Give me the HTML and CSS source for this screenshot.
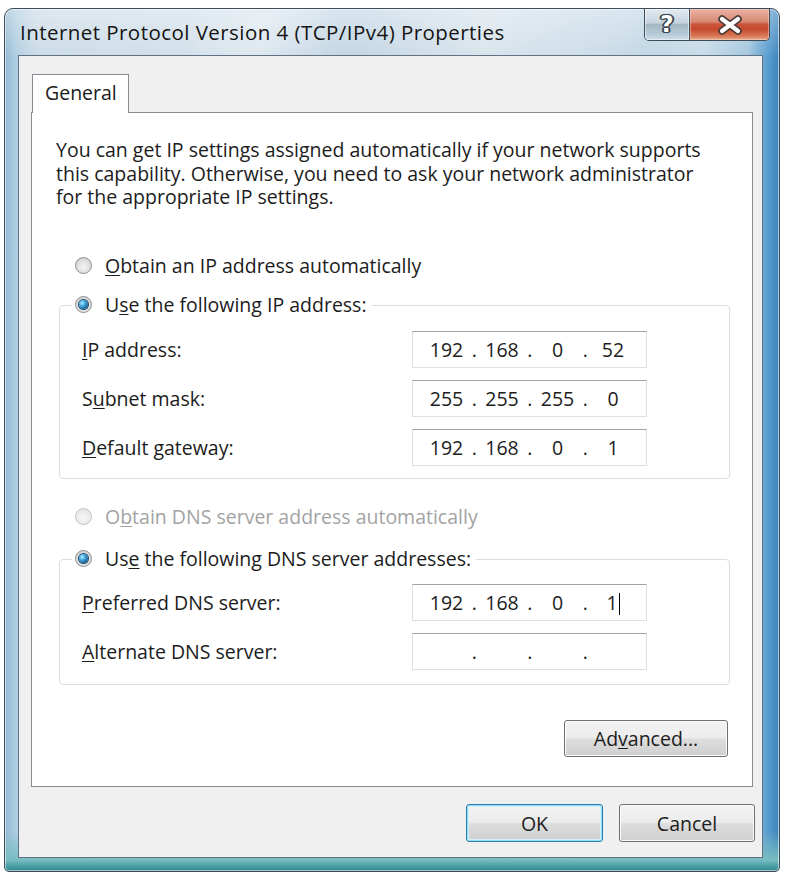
FILE: index.html
```html
<!DOCTYPE html>
<html lang="en">
<head>
<meta charset="utf-8">
<title>Internet Protocol Version 4 (TCP/IPv4) Properties</title>
<link rel="stylesheet" href="styles.css">
</head>
<body>
<div class="window">
  <div class="titlebar">
    <div class="title">Internet Protocol Version 4 (TCP/IPv4) Properties</div>
    <div class="caption-btns">
      <div class="cbtn help"><span class="qmark">?</span></div>
      <div class="cbtn close">
        <svg width="26" height="20" viewBox="0 0 26 20" aria-hidden="true">
          <path d="M5 4 L21 16 M21 4 L5 16" stroke="#4a3a36" stroke-width="7.5" stroke-linecap="round" fill="none"/>
          <path d="M5 4 L21 16 M21 4 L5 16" stroke="#ffffff" stroke-width="4.2" stroke-linecap="round" fill="none"/>
        </svg>
      </div>
    </div>
  </div>
  <div class="client">
    <div class="tabs"><div class="tab">General</div></div>
    <div class="panel">
      <p class="desc">You can get IP settings assigned automatically if your network supports<br>this capability. Otherwise, you need to ask your network administrator<br>for the appropriate IP settings.</p>

      <div class="opt opt-ip"><span class="radio"></span><span><u>O</u>btain an IP address automatically</span></div>

      <div class="group group-ip">
        <div class="legend"><span class="radio on"></span><span>U<u>s</u>e the following IP address:</span></div>
        <div class="rows">
          <div class="row">
            <span class="lbl"><u>I</u>P address:</span>
            <div class="ip"><span class="oct">192</span><span class="dot">.</span><span class="oct">168</span><span class="dot">.</span><span class="oct">0</span><span class="dot">.</span><span class="oct">52</span></div>
          </div>
          <div class="row">
            <span class="lbl">S<u>u</u>bnet mask:</span>
            <div class="ip"><span class="oct">255</span><span class="dot">.</span><span class="oct">255</span><span class="dot">.</span><span class="oct">255</span><span class="dot">.</span><span class="oct">0</span></div>
          </div>
          <div class="row">
            <span class="lbl"><u>D</u>efault gateway:</span>
            <div class="ip"><span class="oct">192</span><span class="dot">.</span><span class="oct">168</span><span class="dot">.</span><span class="oct">0</span><span class="dot">.</span><span class="oct">1</span></div>
          </div>
        </div>
      </div>

      <div class="opt opt-dns disabled"><span class="radio"></span><span>O<u>b</u>tain DNS server address automatically</span></div>

      <div class="group group-dns">
        <div class="legend"><span class="radio on"></span><span>Us<u>e</u> the following DNS server addresses:</span></div>
        <div class="rows">
          <div class="row">
            <span class="lbl"><u>P</u>referred DNS server:</span>
            <div class="ip"><span class="oct">192</span><span class="dot">.</span><span class="oct">168</span><span class="dot">.</span><span class="oct">0</span><span class="dot">.</span><span class="oct">1<span class="caret"></span></span></div>
          </div>
          <div class="row">
            <span class="lbl"><u>A</u>lternate DNS server:</span>
            <div class="ip"><span class="oct"></span><span class="dot">.</span><span class="oct"></span><span class="dot">.</span><span class="oct"></span><span class="dot">.</span><span class="oct"></span></div>
          </div>
        </div>
      </div>

      <div class="adv-wrap"><button class="btn adv" type="button">Ad<u>v</u>anced...</button></div>
    </div>
    <div class="footer">
      <button class="btn ok" type="button">OK</button>
      <button class="btn cancel" type="button">Cancel</button>
    </div>
  </div>
</div>
</body>
</html>
```

FILE: styles.css
```css
* { box-sizing: border-box; }

html, body {
  margin: 0;
  padding: 0;
  background: #ffffff;
}

body {
  font-family: "Open Sans", "Noto Sans", "DejaVu Sans", sans-serif;
  font-size: 19.5px;
  color: #1c1c1c;
}

u { text-decoration: underline; text-underline-offset: 2px; text-decoration-thickness: 1px; }

/* ---------- window frame ---------- */
.window {
  margin: 8px 0 0 4px;
  width: 776px;
  height: 864px;
  border: 1px solid #3b4d5c;
  border-radius: 9px 9px 5px 5px;
  display: flex;
  flex-direction: column;
  overflow: hidden;
  background:
    linear-gradient(to top, #2c858c 0, #4a9fa6 5px, #78bcc0 11px, rgba(120,188,192,0) 40px),
    linear-gradient(to bottom, rgba(255,255,255,0.35) 0, rgba(255,255,255,0) 50px),
    linear-gradient(100deg, rgba(255,255,255,0) 20%, rgba(255,255,255,0.35) 28%, rgba(255,255,255,0) 36%, rgba(255,255,255,0) 70%, rgba(255,255,255,0.3) 76%, rgba(255,255,255,0) 82%),
    linear-gradient(to right, #94b9d3 0, #b2cfe2 12px, #cbdbe7 30px, #d3e0ea 25%, #c3d6e4 45%, #d9e4ec 62%, #c8dae7 80%, #9fc3dc 96%, #5b9dcf 98.5%, #3a83bb 100%);
  box-shadow: inset 0 0 0 1px rgba(255,255,255,0.55);
}

.titlebar {
  height: 46px;
  display: flex;
  justify-content: space-between;
  align-items: flex-start;
  padding: 0 9px 0 15px;
  flex: none;
}

.title {
  padding-top: 11px;
  line-height: 24px;
  font-size: 20.5px;
  letter-spacing: 0.45px;
  color: #141414;
  white-space: nowrap;
}

.caption-btns {
  display: flex;
  height: 32px;
  border: 1px solid #3e4a56;
  border-top: none;
  border-radius: 0 0 5px 5px;
  overflow: hidden;
}

.cbtn {
  height: 100%;
  display: flex;
  align-items: center;
  justify-content: center;
}

.help {
  width: 45px;
  border-right: 1px solid #3e4a56;
  background: linear-gradient(to bottom, #e4ebf0 0%, #c6d3dd 45%, #a4b6c4 50%, #b6c9d6 80%, #cfdfe8 100%);
  box-shadow: inset 0 0 0 1px rgba(255,255,255,0.5);
}

.qmark {
  font-family: "DejaVu Sans", sans-serif;
  font-weight: 700;
  font-size: 23px;
  line-height: 1;
  color: #ffffff;
  text-shadow: 1px 0 #3c4650, -1px 0 #3c4650, 0 1px #3c4650, 0 -1px #3c4650,
               1px 1px #3c4650, -1px -1px #3c4650, 1px -1px #3c4650, -1px 1px #3c4650,
               2px 0 #3c4650, -2px 0 #3c4650;
}

.close {
  width: 79px;
  background: linear-gradient(to bottom, #eab2a5 0%, #d98a76 40%, #c9543a 50%, #c7492e 65%, #d97a5a 88%, #eab08e 100%);
  box-shadow: inset 0 0 0 1px rgba(255,220,210,0.45);
}

/* ---------- client area ---------- */
.client {
  flex: 1;
  margin: 0 16px 13px 13px;
  border: 1px solid #5e7282;
  background: #f0f0f0;
  padding: 18px 7px 0 12px;
  display: flex;
  flex-direction: column;
}

.tabs {
  display: flex;
  height: 38px;
  flex: none;
}

.tab {
  position: relative;
  z-index: 1;
  margin-left: 1px;
  width: 97px;
  height: 39px;
  border: 1px solid #898c95;
  border-bottom: none;
  background: #ffffff;
  padding-left: 12px;
  line-height: 36px;
}

.panel {
  width: 722px;
  height: 675px;
  flex: none;
  border: 1px solid #898c95;
  background: #ffffff;
  display: flex;
  flex-direction: column;
}

.desc {
  margin: 25px 0 0 24px;
  line-height: 23.5px;
  white-space: nowrap;
}

/* radio options */
.opt, .legend {
  display: flex;
  align-items: center;
  gap: 13px;
  height: 24px;
  white-space: nowrap;
}

.opt { padding-left: 43px; }
.opt-ip { margin-top: 45px; }
.opt-dns { margin-top: 26px; }
.disabled { color: #a3a3a3; }

.radio {
  width: 17px;
  height: 17px;
  flex: none;
  border-radius: 50%;
  border: 1px solid #8e8f8f;
  background: radial-gradient(circle at 50% 60%, #f6f6f6 0, #e2e2e2 45%, #c4c4c4 100%);
  display: flex;
  align-items: center;
  justify-content: center;
}

.disabled .radio {
  border-color: #c4c4c4;
  background: radial-gradient(circle at 50% 60%, #f7f7f7 0, #ececec 50%, #dcdcdc 100%);
}

.radio.on::after {
  content: "";
  width: 9px;
  height: 9px;
  border-radius: 50%;
  background: radial-gradient(circle at 35% 35%, #b6ecff 0, #4eb3e6 30%, #1a6ea8 65%, #0c3e66 100%);
  box-shadow: 0 0 0 1px #254d6c;
}

/* group boxes */
.group {
  margin-left: 27px;
  width: 671px;
  border: 1px solid #d5dfe5;
  border-radius: 4px;
}

.group-ip { margin-top: 27px; }
.group-dns { margin-top: 30px; }

.legend {
  margin: -13px 0 0 12px;
  width: fit-content;
  padding: 0 5px 0 3px;
  background: #ffffff;
}

.rows {
  padding-left: 22px;
  display: flex;
  flex-direction: column;
  gap: 12px;
}

.group-ip .rows { margin-top: 14px; padding-bottom: 12px; }
.group-dns .rows { margin-top: 13px; padding-bottom: 14px; }

.row {
  display: flex;
  align-items: center;
  height: 37px;
}

.lbl {
  width: 330px;
  white-space: nowrap;
}

.ip {
  width: 235px;
  height: 37px;
  display: flex;
  align-items: center;
  padding-left: 9px;
  border: 1px solid #dbdfe6;
  border-top-color: #9da1a8;
  background: #ffffff;
  white-space: nowrap;
}

.oct {
  width: 49px;
  text-align: center;
}

.dot {
  width: 6.5px;
  display: flex;
  justify-content: center;
}

.caret {
  display: inline-block;
  width: 1px;
  height: 22px;
  background: #000000;
  vertical-align: -5px;
  margin-left: 1px;
}

/* buttons */
.btn {
  font-family: inherit;
  font-size: 19.5px;
  color: #1c1c1c;
  height: 38px;
  border: 1px solid #707070;
  border-radius: 3px;
  background: linear-gradient(to bottom, #f3f3f3 0%, #ececec 48%, #dddddd 52%, #cfcfcf 100%);
  box-shadow: inset 0 0 0 1px #fbfbfb;
  padding: 0;
  display: flex;
  align-items: center;
  justify-content: center;
}

.adv-wrap {
  margin-top: 35px;
  display: flex;
  justify-content: flex-end;
  padding-right: 24px;
}

.adv {
  width: 164px;
  height: 37px;
}

.footer {
  margin-top: 17px;
  display: flex;
  justify-content: flex-end;
  gap: 16px;
}

.ok {
  width: 137px;
  border-color: #2c7ea8;
  box-shadow: inset 0 0 0 1px #8fdcf4, inset 0 0 0 2px #d3f1fb;
}

.cancel { width: 136px; }
```
